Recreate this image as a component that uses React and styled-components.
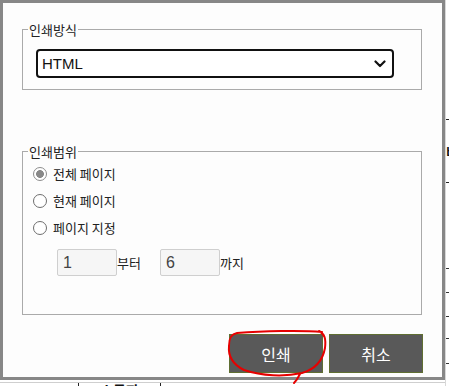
import React from "react";
import styled, { createGlobalStyle } from "styled-components";

const Global = createGlobalStyle`
  html, body { margin: 0; padding: 0; background: #ffffff; }
  body { font-family: "Noto Sans CJK KR", "Liberation Sans", sans-serif; }
`;

const KR = `"Noto Sans CJK KR", "Liberation Sans", sans-serif`;
const LAT = `"Liberation Sans", "Noto Sans CJK KR", sans-serif`;

const Page = styled.div`
  position: relative;
  width: 449px;
  height: 386px;
  overflow: hidden;
  background: #ffffff;
`;

/* page behind the dialog */
const BackSheet = styled.div`
  display: grid;
  grid-template-columns: 445px 4px;
  grid-template-rows: 380px 6px;
  width: 449px;
  height: 386px;
`;

const RightStrip = styled.div`
  grid-column: 2;
  grid-row: 1 / span 2;
  display: flex;
  flex-direction: column;
  border-left: 1px solid #d8d8d8;
`;

const StripCell = styled.div`
  height: ${(p) => p.$h}px;
  flex: none;
  box-sizing: border-box;
  border-bottom: 1px solid ${(p) => p.$line || "#222"};
  overflow: hidden;
  font: 700 13px ${KR};
  color: #111;
  line-height: ${(p) => p.$h}px;
  white-space: nowrap;
`;

const BottomRow = styled.div`
  grid-column: 1;
  grid-row: 2;
  display: flex;
  align-items: flex-start;
  border-top: 1px solid #cfcfcf;
  margin-top: 2px;
`;

const BottomCell = styled.div`
  flex: ${(p) => (p.$w ? "none" : "1")};
  width: ${(p) => (p.$w ? p.$w + "px" : "auto")};
  height: 6px;
  box-sizing: border-box;
  border-left: ${(p) => (p.$edge ? "1px solid #222" : "none")};
  font: 700 14px ${KR};
  color: #111;
  text-align: center;
  line-height: 14px;
  padding-top: 0;
  overflow: hidden;
`;

/* dialog */
const Dialog = styled.div`
  position: absolute;
  left: 0;
  top: 0;
  width: 445px;
  height: 380px;
  box-sizing: border-box;
  border: 3px solid #878787;
  background: #fdfdfd;
  padding: 19px 20px 0 19px;
  display: flex;
  flex-direction: column;
`;

const Group = styled.fieldset`
  margin: ${(p) => p.$mt || 0}px 0 0 0;
  width: 400px;
  box-sizing: border-box;
  border: 1px solid #aaaaaa;
  padding: ${(p) => p.$pt}px 0 ${(p) => p.$pb}px 5px;
  min-width: 0;
`;

const Legend = styled.legend`
  padding: 0 1px;
  margin: 0;
  font: 400 13px ${KR};
  line-height: 15px;
  color: #222;
`;

const SelectBox = styled.div`
  margin-left: 8px;
  width: 358px;
  height: 29px;
  box-sizing: border-box;
  border: 2px solid #111;
  border-radius: 4px;
  background: #ffffff;
  display: flex;
  align-items: center;
  justify-content: space-between;
  padding: 0 6px 0 4px;
  font: 400 15px ${LAT};
  color: #111;
`;

const RadioList = styled.div`
  margin-left: 5px;
  display: flex;
  flex-direction: column;
`;

const RadioRow = styled.label`
  height: 27px;
  display: flex;
  align-items: center;
  font: 400 13px ${KR};
  color: #222;
`;

const Radio = styled.span`
  width: 14px;
  height: 14px;
  box-sizing: border-box;
  border-radius: 50%;
  border: ${(p) => (p.$on ? "1.5px solid #8d8d8d" : "1px solid #6e6e6e")};
  background: ${(p) =>
    p.$on
      ? "radial-gradient(circle, #888 0, #888 3.6px, #fff 4.2px)"
      : "#fff"};
  margin-right: 6px;
  flex: none;
`;

const RangeRow = styled.div`
  margin: 8px 0 0 29px;
  display: flex;
  align-items: center;
  font: 400 13px ${KR};
  color: #222;
`;

const NumBox = styled.div`
  width: 60px;
  height: 27px;
  box-sizing: border-box;
  border: 1px solid #cfcfcf;
  border-radius: 2px;
  background: #f6f6f6;
  padding: 0 0 0 5px;
  display: flex;
  align-items: center;
  font: 400 16px ${LAT};
  color: #444;
`;

const Unit = styled.span`
  margin-right: ${(p) => p.$gap || 0}px;
`;

const Actions = styled.div`
  margin-top: 19px;
  margin-right: -1px;
  display: flex;
  justify-content: flex-end;
  gap: 6px;
`;

const Btn = styled.button`
  width: 94px;
  height: 39px;
  box-sizing: border-box;
  border: 1px solid #5f6e32;
  background: #595959;
  color: #ffffff;
  font: 400 16px ${KR};
  padding: 0;
  cursor: pointer;
`;

const Scribble = styled.svg`
  position: absolute;
  left: 222px;
  top: 326px;
  width: 112px;
  height: 60px;
  pointer-events: none;
`;

const Chevron = () => (
  <svg width="12" height="8" viewBox="0 0 12 8">
    <path d="M1.5 1.5 L6 6 L10.5 1.5" fill="none" stroke="#111" strokeWidth="2.2" strokeLinecap="round" strokeLinejoin="round" />
  </svg>
);

export default function App() {
  return (
    <>
      <Global />
      <Page>
        <BackSheet>
          <RightStrip>
            <StripCell $h={120} />
            <StripCell $h={63}>비</StripCell>
            <StripCell $h={86} $line="#333" />
            <StripCell $h={24} $line="#333" />
            <StripCell $h={24} $line="#333" />
            <StripCell $h={22} $line="#333" />
            <StripCell $h={25} $line="#333" />
            <StripCell $h={22} $line="#fff" />
          </RightStrip>
          <BottomRow>
            <BottomCell $w={78} />
            <BottomCell $w={82} $edge>소득자</BottomCell>
            <BottomCell $edge />
          </BottomRow>
        </BackSheet>

        <Dialog>
          <Group $pt={12} $pb={11}>
            <Legend>인쇄방식</Legend>
            <SelectBox>
              <span>HTML</span>
              <Chevron />
            </SelectBox>
          </Group>

          <Group $mt={54} $pt={1} $pb={38}>
            <Legend>인쇄범위</Legend>
            <RadioList>
              <RadioRow>
                <Radio $on />
                전체 페이지
              </RadioRow>
              <RadioRow>
                <Radio />
                현재 페이지
              </RadioRow>
              <RadioRow>
                <Radio />
                페이지 지정
              </RadioRow>
            </RadioList>
            <RangeRow>
              <NumBox>1</NumBox>
              <Unit $gap={19}>부터</Unit>
              <NumBox>6</NumBox>
              <Unit>까지</Unit>
            </RangeRow>
          </Group>

          <Actions>
            <Btn>인쇄</Btn>
            <Btn>취소</Btn>
          </Actions>
        </Dialog>

        <Scribble viewBox="0 0 112 60">
          <path
            d="M100 6 C80 4 40 5 15 7 C9 8 7 12 7 20 C6 30 10 38 22 44 C40 50 62 51 80 47 C94 43 101 33 103 22 C104 13 103 8 97 5 M78 48 C76 52 74 55 72 57"
            fill="none"
            stroke="#e60000"
            strokeWidth="2"
            strokeLinecap="round"
            strokeLinejoin="round"
          />
        </Scribble>
      </Page>
    </>
  );
}
